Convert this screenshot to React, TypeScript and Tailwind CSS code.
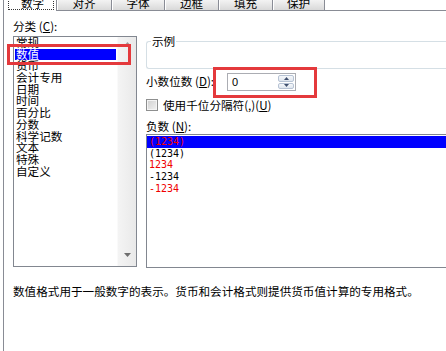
export default function App() {
  const cats = ["常规", "数值", "货币", "会计专用", "日期", "时间", "百分比", "分数", "科学记数", "文本", "特殊", "自定义"];
  const negs = [
    { t: "(1234)", c: "text-[#f00000]", sel: true },
    { t: "(1234)", c: "text-black", sel: false },
    { t: "1234", c: "text-[#f00000]", sel: false },
    { t: "-1234", c: "text-black", sel: false },
    { t: "-1234", c: "text-[#f00000]", sel: false },
  ];
  const tabs = [
    { t: "对齐", w: "w-[55px]" },
    { t: "字体", w: "w-[53px]" },
    { t: "边框", w: "w-[54px]" },
    { t: "填充", w: "w-[54px]" },
    { t: "保护", w: "w-[52px]" },
  ];
  return (
    <div className="w-[446px] h-[351px] overflow-hidden bg-white relative flex flex-col font-['Noto_Sans_CJK_SC',sans-serif] text-[11.6px] text-black">
      {/* tabs */}
      <div className="flex h-[11px] shrink-0">
        <div className="w-[3px]" />
        <div className="w-[54px] relative bg-white border-x border-[#898c95]">
          <div className="absolute left-[4px] right-[2px] top-[-4px] bottom-[1px] border border-dotted border-[#333]" />
          <div className="-mt-[3px] leading-[12px] text-center pl-[5px] whitespace-nowrap">数字</div>
        </div>
        {tabs.map((tb) => (
          <div
            key={tb.t}
            className={`${tb.w} border-r border-b border-[#898c95] bg-gradient-to-b from-[#f3f3f3] to-[#d9d9d9] shadow-[inset_1px_0_0_#ffffff] overflow-hidden`}
          >
            <div className="-mt-[3px] leading-[12px] text-center whitespace-nowrap">{tb.t}</div>
          </div>
        ))}
        <div className="flex-1 border-b border-[#898c95]" />
      </div>

      {/* panel */}
      <div className="flex-1 ml-[3px] border-l border-[#898c95] flex flex-col">
        <div className="flex">
          {/* left column */}
          <div className="w-[133px] shrink-0 pl-[9px] pt-[9px] flex flex-col">
            <div className="leading-[12px] h-[12px] whitespace-nowrap">
              分类 (<span className="underline">C</span>):
            </div>
            <div className="mt-[4px] w-[124px] h-[231px] border border-[#828790] flex overflow-hidden">
              <div className="flex-1 overflow-hidden">
                {cats.map((c) => (
                  <div
                    key={c}
                    className={
                      c === "数值"
                        ? "h-[11.7px] leading-[11.7px] mx-[1px] pl-[1px] whitespace-nowrap bg-[#0000ff] text-white"
                        : "h-[11.7px] leading-[11.7px] mx-[1px] pl-[1px] whitespace-nowrap"
                    }
                  >
                    {c}
                  </div>
                ))}
              </div>
              <div className="w-[19px] bg-gradient-to-r from-[#f4f4f4] to-[#e9e9e9] border-l border-[#fafafa] flex flex-col justify-between items-center pt-[5px] pb-[9px]">
                <svg width="7" height="4" viewBox="0 0 7 4">
                  <path d="M0 4 L3.5 0 L7 4 Z" fill="#9a9a9a" />
                </svg>
                <svg width="7" height="4" viewBox="0 0 7 4">
                  <path d="M0 0 L7 0 L3.5 4 Z" fill="#6e6e6e" />
                </svg>
              </div>
            </div>
          </div>

          {/* right column */}
          <div className="flex-1 ml-[9px] flex flex-col">
            <div className="mt-[30px] h-[28px] relative border border-r-0 border-[#d5dfe5] rounded-l-[3px]">
              <span className="absolute left-[4px] top-[-7px] bg-white px-[1px] leading-[12px]">示例</span>
            </div>
            <div className="mt-[4px] h-[18px] flex items-center">
              <div className="w-[81px] -mt-[3px] leading-[12px] whitespace-nowrap">
                小数位数 (<span className="underline">D</span>):
              </div>
              <div className="w-[69px] h-[18px] border border-[#abadb3] flex items-center">
                <span className="flex-1 pl-[4px] font-['Liberation_Sans',sans-serif] text-[11px] leading-[12px]">0</span>
                <div className="w-[18px] h-full flex flex-col p-[1px] gap-[1px]">
                  <div className="flex-1 border border-[#b7c3d4] rounded-[2px] bg-gradient-to-b from-[#f6f8fb] to-[#dfe6ee] flex items-center justify-center">
                    <svg width="5" height="3" viewBox="0 0 5 3">
                      <path d="M0 3 L2.5 0 L5 3 Z" fill="#3f4f6e" />
                    </svg>
                  </div>
                  <div className="flex-1 border border-[#b7c3d4] rounded-[2px] bg-gradient-to-b from-[#f6f8fb] to-[#dfe6ee] flex items-center justify-center">
                    <svg width="5" height="3" viewBox="0 0 5 3">
                      <path d="M0 0 L5 0 L2.5 3 Z" fill="#3f4f6e" />
                    </svg>
                  </div>
                </div>
              </div>
            </div>
            <div className="mt-[8px] h-[12px] flex items-center">
              <div className="w-[12px] h-[12px] border border-[#8e8f8f] bg-gradient-to-br from-[#cfcfcf] to-[#f2f2f2] shadow-[inset_0_0_0_1px_#f4f4f4]" />
              <div className="ml-[5px] leading-[12px] whitespace-nowrap">
                使用千位分隔符(,)(<span className="underline">U</span>)
              </div>
            </div>
            <div className="mt-[9px] leading-[12px] h-[12px] whitespace-nowrap">
              负数 (<span className="underline">N</span>):
            </div>
            <div className="mt-[2px] h-[134px] border border-r-0 border-[#828790] pt-[1px] overflow-hidden">
              {negs.map((n, i) => (
                <div
                  key={i}
                  className={`h-[11.7px] leading-[11.7px] pl-[2px] font-['DejaVu_Sans_Mono',monospace] text-[10px] whitespace-nowrap ${n.c} ${n.sel ? "bg-[#0000ff]" : ""}`}
                >
                  {n.t}
                </div>
              ))}
            </div>
          </div>
        </div>

        <div className="mt-[17px] pl-[9px] leading-[12px] whitespace-nowrap">
          数值格式用于一般数字的表示。货币和会计格式则提供货币值计算的专用格式。
        </div>
      </div>

      {/* red annotation boxes */}
      <div className="absolute left-[7px] top-[44px] w-[124px] h-[21px] border-[3px] border-[#e4393c]" />
      <div className="absolute left-[213px] top-[67px] w-[104px] h-[31px] border-[3px] border-[#e4393c]" />
    </div>
  );
}
